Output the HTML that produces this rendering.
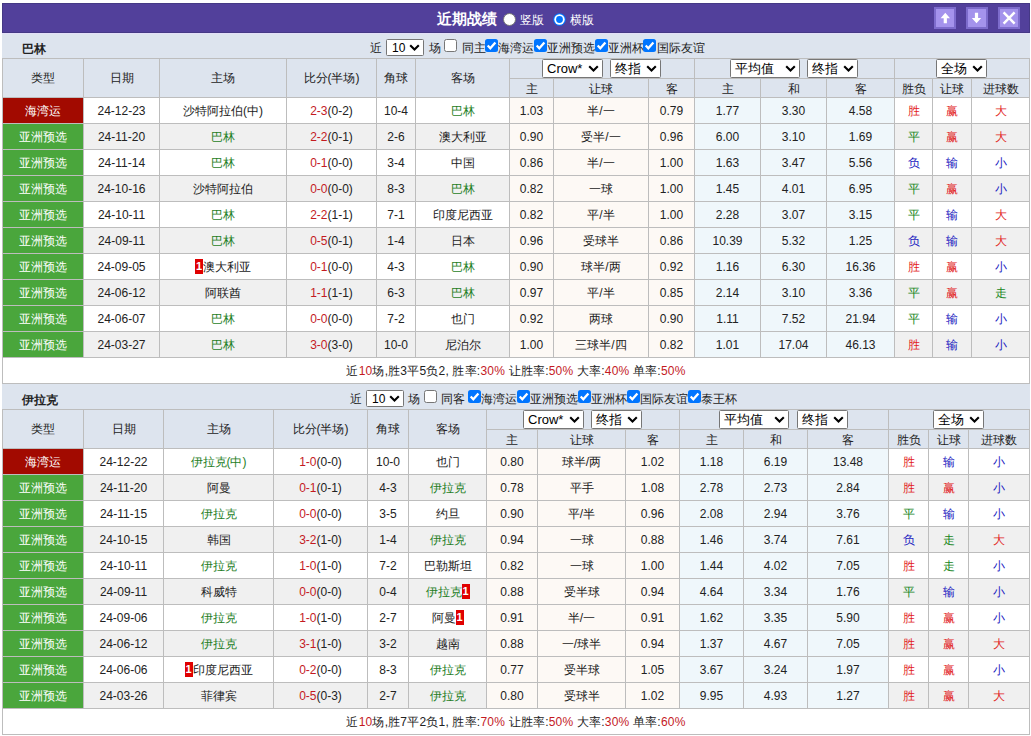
<!DOCTYPE html>
<html><head><meta charset="utf-8"><style>
html,body{margin:0;padding:0;background:#fff;width:1031px;height:736px;overflow:hidden}
body{position:relative;font-family:"Liberation Sans",sans-serif;font-size:12px;color:#222222}
body div{position:absolute;box-sizing:content-box}
.t{white-space:nowrap}
</style></head><body>
<div style="left:2px;top:3px;width:1026px;height:28px;background:#52409b;border:1px solid #453985"></div><div class="t" style="left:437px;top:5px;height:28px;line-height:28px;white-space:nowrap;font-size:15px;font-weight:bold;color:#fff">近期战绩</div><div style="left:503px;top:13px;width:13px;height:13px"><svg width="13" height="13" viewBox="0 0 13 13" style="display:block"><circle cx="6.5" cy="6.5" r="6" fill="#fff" stroke="#767676" stroke-width="1"/></svg></div><div class="t" style="left:520px;top:6px;height:28px;line-height:28px;white-space:nowrap;color:#fff">竖版</div><div style="left:553px;top:13px;width:13px;height:13px"><svg width="13" height="13" viewBox="0 0 13 13" style="display:block"><circle cx="6.5" cy="6.5" r="6.3" fill="#0075ff"/><circle cx="6.5" cy="6.5" r="5.2" fill="#fff"/><circle cx="6.5" cy="6.5" r="3.4" fill="#0075ff"/></svg></div><div class="t" style="left:570px;top:6px;height:28px;line-height:28px;white-space:nowrap;color:#fff">横版</div><div style="left:934px;top:7px;width:18px;height:18px;background:#a493ec;border:2px solid #7d6ccc"><svg width="18" height="18" viewBox="0 0 18 18" style="display:block"><path d="M9.3 3.8 L14 9.3 L10.9 9.3 L10.9 14.2 L7.7 14.2 L7.7 9.3 L4.6 9.3 Z" fill="#fff"/></svg></div><div style="left:966px;top:7px;width:18px;height:18px;background:#a493ec;border:2px solid #7d6ccc"><svg width="18" height="18" viewBox="0 0 18 18" style="display:block"><path d="M8.5 14.2 L13.2 8.9 L10.1 8.9 L10.1 3.8 L6.9 3.8 L6.9 8.9 L3.8 8.9 Z" fill="#fff"/></svg></div><div style="left:998px;top:7px;width:18px;height:18px;background:#a493ec;border:2px solid #7d6ccc"><svg width="18" height="18" viewBox="0 0 18 18" style="display:block"><path d="M3.6 3.4 L14.6 14.6 M14.6 3.4 L3.6 14.6" stroke="#fff" stroke-width="2.5" fill="none"/></svg></div><div style="left:2px;top:33px;width:1028px;height:25px;background:#dde4ee"></div><div class="t" style="left:22px;top:41px;height:16px;line-height:16px;white-space:nowrap;font-weight:bold;color:#222">巴林</div><div class="t" style="left:370px;top:40px;height:16px;line-height:16px;white-space:nowrap;color:#222222">近</div><div style="left:386px;top:39px;width:36px;height:15px;background:#fff;border:1px solid #767676;border-radius:1.5px;"><div class="t" style="left:5px;top:1px;height:15px;line-height:15px;font-size:12px;color:#000;font-family:"Liberation Mono",monospace;">10</div><svg width="11" height="7" viewBox="0 0 11 7" style="position:absolute;right:3px;top:4px"><path d="M1.2 1.2 L5.5 5.5 L9.8 1.2" fill="none" stroke="#000" stroke-width="2.1"/></svg></div><div class="t" style="left:429px;top:40px;height:16px;line-height:16px;white-space:nowrap;color:#222222">场</div><div style="left:444px;top:39px;width:13px;height:13px"><svg width="13" height="13" viewBox="0 0 13 13" style="display:block"><rect x="0.5" y="0.5" width="12" height="12" rx="2" fill="#fff" stroke="#767676" stroke-width="1"/></svg></div><div class="t" style="left:462px;top:40px;height:16px;line-height:16px;white-space:nowrap;color:#222222">同主</div><div style="left:485px;top:39px;width:13px;height:13px"><svg width="13" height="13" viewBox="0 0 13 13" style="display:block"><rect x="0" y="0" width="13" height="13" rx="2.5" fill="#0075ff"/><path d="M2.7 6.5 L5.3 9.2 L10.4 3.4" fill="none" stroke="#fff" stroke-width="2.3"/></svg></div><div class="t" style="left:498px;top:40px;height:16px;line-height:16px;white-space:nowrap;color:#222222">海湾运</div><div style="left:534px;top:39px;width:13px;height:13px"><svg width="13" height="13" viewBox="0 0 13 13" style="display:block"><rect x="0" y="0" width="13" height="13" rx="2.5" fill="#0075ff"/><path d="M2.7 6.5 L5.3 9.2 L10.4 3.4" fill="none" stroke="#fff" stroke-width="2.3"/></svg></div><div class="t" style="left:547px;top:40px;height:16px;line-height:16px;white-space:nowrap;color:#222222">亚洲预选</div><div style="left:595px;top:39px;width:13px;height:13px"><svg width="13" height="13" viewBox="0 0 13 13" style="display:block"><rect x="0" y="0" width="13" height="13" rx="2.5" fill="#0075ff"/><path d="M2.7 6.5 L5.3 9.2 L10.4 3.4" fill="none" stroke="#fff" stroke-width="2.3"/></svg></div><div class="t" style="left:608px;top:40px;height:16px;line-height:16px;white-space:nowrap;color:#222222">亚洲杯</div><div style="left:643px;top:39px;width:13px;height:13px"><svg width="13" height="13" viewBox="0 0 13 13" style="display:block"><rect x="0" y="0" width="13" height="13" rx="2.5" fill="#0075ff"/><path d="M2.7 6.5 L5.3 9.2 L10.4 3.4" fill="none" stroke="#fff" stroke-width="2.3"/></svg></div><div class="t" style="left:657px;top:40px;height:16px;line-height:16px;white-space:nowrap;color:#222222">国际友谊</div><div style="left:2px;top:58px;width:1028px;height:40px;background:#dde4ee"></div><div class="t" style="left:3px;top:59px;width:80px;height:38px;line-height:38px;text-align:center;color:#222222">类型</div><div class="t" style="left:84px;top:59px;width:75px;height:38px;line-height:38px;text-align:center;color:#222222">日期</div><div class="t" style="left:160px;top:59px;width:126px;height:38px;line-height:38px;text-align:center;color:#222222">主场</div><div class="t" style="left:287px;top:59px;width:89px;height:38px;line-height:38px;text-align:center;color:#222222">比分(半场)</div><div class="t" style="left:377px;top:59px;width:38px;height:38px;line-height:38px;text-align:center;color:#222222">角球</div><div class="t" style="left:416px;top:59px;width:93px;height:38px;line-height:38px;text-align:center;color:#222222">客场</div><div class="t" style="left:510px;top:80px;width:43px;height:18px;line-height:18px;text-align:center;color:#222222">主</div><div class="t" style="left:554px;top:80px;width:94px;height:18px;line-height:18px;text-align:center;color:#222222">让球</div><div class="t" style="left:649px;top:80px;width:45px;height:18px;line-height:18px;text-align:center;color:#222222">客</div><div class="t" style="left:695px;top:80px;width:65px;height:18px;line-height:18px;text-align:center;color:#222222">主</div><div class="t" style="left:761px;top:80px;width:65px;height:18px;line-height:18px;text-align:center;color:#222222">和</div><div class="t" style="left:827px;top:80px;width:67px;height:18px;line-height:18px;text-align:center;color:#222222">客</div><div class="t" style="left:895px;top:80px;width:37px;height:18px;line-height:18px;text-align:center;color:#222222">胜负</div><div class="t" style="left:933px;top:80px;width:38px;height:18px;line-height:18px;text-align:center;color:#222222">让球</div><div class="t" style="left:972px;top:80px;width:57px;height:18px;line-height:18px;text-align:center;color:#222222">进球数</div><div style="left:3px;top:98px;width:80px;height:25px;background:#a20a00"></div><div style="left:84px;top:98px;width:75px;height:25px;background:#fff"></div><div style="left:160px;top:98px;width:126px;height:25px;background:#fff"></div><div style="left:287px;top:98px;width:89px;height:25px;background:#fff"></div><div style="left:377px;top:98px;width:38px;height:25px;background:#fff"></div><div style="left:416px;top:98px;width:93px;height:25px;background:#fff"></div><div style="left:510px;top:98px;width:43px;height:25px;background:#fdf9f5"></div><div style="left:554px;top:98px;width:94px;height:25px;background:#fdf9f5"></div><div style="left:649px;top:98px;width:45px;height:25px;background:#fdf9f5"></div><div style="left:695px;top:98px;width:65px;height:25px;background:#eff7fb"></div><div style="left:761px;top:98px;width:65px;height:25px;background:#eff7fb"></div><div style="left:827px;top:98px;width:67px;height:25px;background:#eff7fb"></div><div style="left:895px;top:98px;width:37px;height:25px;background:#fff"></div><div style="left:933px;top:98px;width:38px;height:25px;background:#fff"></div><div style="left:972px;top:98px;width:57px;height:25px;background:#fff"></div><div class="t" style="left:3px;top:99px;width:80px;height:25px;line-height:25px;text-align:center;color:#222222"><span style="color:#fff">海湾运</span></div><div class="t" style="left:84px;top:99px;width:75px;height:25px;line-height:25px;text-align:center;color:#222222">24-12-23</div><div class="t" style="left:160px;top:99px;width:126px;height:25px;line-height:25px;text-align:center;color:#222222"><span style="color:#222222">沙特阿拉伯(中)</span></div><div class="t" style="left:287px;top:99px;width:89px;height:25px;line-height:25px;text-align:center;color:#222222"><span style="color:#c41a1f">2-3</span>(0-2)</div><div class="t" style="left:377px;top:99px;width:38px;height:25px;line-height:25px;text-align:center;color:#222222">10-4</div><div class="t" style="left:416px;top:99px;width:93px;height:25px;line-height:25px;text-align:center;color:#222222"><span style="color:#1e7e1e">巴林</span></div><div class="t" style="left:510px;top:99px;width:43px;height:25px;line-height:25px;text-align:center;color:#222222">1.03</div><div class="t" style="left:554px;top:99px;width:94px;height:25px;line-height:25px;text-align:center;color:#222222">半/一</div><div class="t" style="left:649px;top:99px;width:45px;height:25px;line-height:25px;text-align:center;color:#222222">0.79</div><div class="t" style="left:695px;top:99px;width:65px;height:25px;line-height:25px;text-align:center;color:#222222">1.77</div><div class="t" style="left:761px;top:99px;width:65px;height:25px;line-height:25px;text-align:center;color:#222222">3.30</div><div class="t" style="left:827px;top:99px;width:67px;height:25px;line-height:25px;text-align:center;color:#222222">4.58</div><div class="t" style="left:895px;top:99px;width:37px;height:25px;line-height:25px;text-align:center;color:#222222"><span style="color:#e21c1c">胜</span></div><div class="t" style="left:933px;top:99px;width:38px;height:25px;line-height:25px;text-align:center;color:#222222"><span style="color:#e21c1c">赢</span></div><div class="t" style="left:972px;top:99px;width:57px;height:25px;line-height:25px;text-align:center;color:#222222"><span style="color:#e21c1c">大</span></div><div style="left:3px;top:124px;width:80px;height:25px;background:#4aa63c"></div><div style="left:84px;top:124px;width:75px;height:25px;background:#f0f0f0"></div><div style="left:160px;top:124px;width:126px;height:25px;background:#f0f0f0"></div><div style="left:287px;top:124px;width:89px;height:25px;background:#f0f0f0"></div><div style="left:377px;top:124px;width:38px;height:25px;background:#f0f0f0"></div><div style="left:416px;top:124px;width:93px;height:25px;background:#f0f0f0"></div><div style="left:510px;top:124px;width:43px;height:25px;background:#fdf9f5"></div><div style="left:554px;top:124px;width:94px;height:25px;background:#fdf9f5"></div><div style="left:649px;top:124px;width:45px;height:25px;background:#fdf9f5"></div><div style="left:695px;top:124px;width:65px;height:25px;background:#eff7fb"></div><div style="left:761px;top:124px;width:65px;height:25px;background:#eff7fb"></div><div style="left:827px;top:124px;width:67px;height:25px;background:#eff7fb"></div><div style="left:895px;top:124px;width:37px;height:25px;background:#f0f0f0"></div><div style="left:933px;top:124px;width:38px;height:25px;background:#f0f0f0"></div><div style="left:972px;top:124px;width:57px;height:25px;background:#f0f0f0"></div><div class="t" style="left:3px;top:125px;width:80px;height:25px;line-height:25px;text-align:center;color:#222222"><span style="color:#fff">亚洲预选</span></div><div class="t" style="left:84px;top:125px;width:75px;height:25px;line-height:25px;text-align:center;color:#222222">24-11-20</div><div class="t" style="left:160px;top:125px;width:126px;height:25px;line-height:25px;text-align:center;color:#222222"><span style="color:#1e7e1e">巴林</span></div><div class="t" style="left:287px;top:125px;width:89px;height:25px;line-height:25px;text-align:center;color:#222222"><span style="color:#c41a1f">2-2</span>(0-1)</div><div class="t" style="left:377px;top:125px;width:38px;height:25px;line-height:25px;text-align:center;color:#222222">2-6</div><div class="t" style="left:416px;top:125px;width:93px;height:25px;line-height:25px;text-align:center;color:#222222"><span style="color:#222222">澳大利亚</span></div><div class="t" style="left:510px;top:125px;width:43px;height:25px;line-height:25px;text-align:center;color:#222222">0.90</div><div class="t" style="left:554px;top:125px;width:94px;height:25px;line-height:25px;text-align:center;color:#222222">受半/一</div><div class="t" style="left:649px;top:125px;width:45px;height:25px;line-height:25px;text-align:center;color:#222222">0.96</div><div class="t" style="left:695px;top:125px;width:65px;height:25px;line-height:25px;text-align:center;color:#222222">6.00</div><div class="t" style="left:761px;top:125px;width:65px;height:25px;line-height:25px;text-align:center;color:#222222">3.10</div><div class="t" style="left:827px;top:125px;width:67px;height:25px;line-height:25px;text-align:center;color:#222222">1.69</div><div class="t" style="left:895px;top:125px;width:37px;height:25px;line-height:25px;text-align:center;color:#222222"><span style="color:#16861a">平</span></div><div class="t" style="left:933px;top:125px;width:38px;height:25px;line-height:25px;text-align:center;color:#222222"><span style="color:#e21c1c">赢</span></div><div class="t" style="left:972px;top:125px;width:57px;height:25px;line-height:25px;text-align:center;color:#222222"><span style="color:#e21c1c">大</span></div><div style="left:3px;top:150px;width:80px;height:25px;background:#4aa63c"></div><div style="left:84px;top:150px;width:75px;height:25px;background:#fff"></div><div style="left:160px;top:150px;width:126px;height:25px;background:#fff"></div><div style="left:287px;top:150px;width:89px;height:25px;background:#fff"></div><div style="left:377px;top:150px;width:38px;height:25px;background:#fff"></div><div style="left:416px;top:150px;width:93px;height:25px;background:#fff"></div><div style="left:510px;top:150px;width:43px;height:25px;background:#fdf9f5"></div><div style="left:554px;top:150px;width:94px;height:25px;background:#fdf9f5"></div><div style="left:649px;top:150px;width:45px;height:25px;background:#fdf9f5"></div><div style="left:695px;top:150px;width:65px;height:25px;background:#eff7fb"></div><div style="left:761px;top:150px;width:65px;height:25px;background:#eff7fb"></div><div style="left:827px;top:150px;width:67px;height:25px;background:#eff7fb"></div><div style="left:895px;top:150px;width:37px;height:25px;background:#fff"></div><div style="left:933px;top:150px;width:38px;height:25px;background:#fff"></div><div style="left:972px;top:150px;width:57px;height:25px;background:#fff"></div><div class="t" style="left:3px;top:151px;width:80px;height:25px;line-height:25px;text-align:center;color:#222222"><span style="color:#fff">亚洲预选</span></div><div class="t" style="left:84px;top:151px;width:75px;height:25px;line-height:25px;text-align:center;color:#222222">24-11-14</div><div class="t" style="left:160px;top:151px;width:126px;height:25px;line-height:25px;text-align:center;color:#222222"><span style="color:#1e7e1e">巴林</span></div><div class="t" style="left:287px;top:151px;width:89px;height:25px;line-height:25px;text-align:center;color:#222222"><span style="color:#c41a1f">0-1</span>(0-0)</div><div class="t" style="left:377px;top:151px;width:38px;height:25px;line-height:25px;text-align:center;color:#222222">3-4</div><div class="t" style="left:416px;top:151px;width:93px;height:25px;line-height:25px;text-align:center;color:#222222"><span style="color:#222222">中国</span></div><div class="t" style="left:510px;top:151px;width:43px;height:25px;line-height:25px;text-align:center;color:#222222">0.86</div><div class="t" style="left:554px;top:151px;width:94px;height:25px;line-height:25px;text-align:center;color:#222222">半/一</div><div class="t" style="left:649px;top:151px;width:45px;height:25px;line-height:25px;text-align:center;color:#222222">1.00</div><div class="t" style="left:695px;top:151px;width:65px;height:25px;line-height:25px;text-align:center;color:#222222">1.63</div><div class="t" style="left:761px;top:151px;width:65px;height:25px;line-height:25px;text-align:center;color:#222222">3.47</div><div class="t" style="left:827px;top:151px;width:67px;height:25px;line-height:25px;text-align:center;color:#222222">5.56</div><div class="t" style="left:895px;top:151px;width:37px;height:25px;line-height:25px;text-align:center;color:#222222"><span style="color:#1a1ac0">负</span></div><div class="t" style="left:933px;top:151px;width:38px;height:25px;line-height:25px;text-align:center;color:#222222"><span style="color:#1a1ac0">输</span></div><div class="t" style="left:972px;top:151px;width:57px;height:25px;line-height:25px;text-align:center;color:#222222"><span style="color:#1a1ac0">小</span></div><div style="left:3px;top:176px;width:80px;height:25px;background:#4aa63c"></div><div style="left:84px;top:176px;width:75px;height:25px;background:#f0f0f0"></div><div style="left:160px;top:176px;width:126px;height:25px;background:#f0f0f0"></div><div style="left:287px;top:176px;width:89px;height:25px;background:#f0f0f0"></div><div style="left:377px;top:176px;width:38px;height:25px;background:#f0f0f0"></div><div style="left:416px;top:176px;width:93px;height:25px;background:#f0f0f0"></div><div style="left:510px;top:176px;width:43px;height:25px;background:#fdf9f5"></div><div style="left:554px;top:176px;width:94px;height:25px;background:#fdf9f5"></div><div style="left:649px;top:176px;width:45px;height:25px;background:#fdf9f5"></div><div style="left:695px;top:176px;width:65px;height:25px;background:#eff7fb"></div><div style="left:761px;top:176px;width:65px;height:25px;background:#eff7fb"></div><div style="left:827px;top:176px;width:67px;height:25px;background:#eff7fb"></div><div style="left:895px;top:176px;width:37px;height:25px;background:#f0f0f0"></div><div style="left:933px;top:176px;width:38px;height:25px;background:#f0f0f0"></div><div style="left:972px;top:176px;width:57px;height:25px;background:#f0f0f0"></div><div class="t" style="left:3px;top:177px;width:80px;height:25px;line-height:25px;text-align:center;color:#222222"><span style="color:#fff">亚洲预选</span></div><div class="t" style="left:84px;top:177px;width:75px;height:25px;line-height:25px;text-align:center;color:#222222">24-10-16</div><div class="t" style="left:160px;top:177px;width:126px;height:25px;line-height:25px;text-align:center;color:#222222"><span style="color:#222222">沙特阿拉伯</span></div><div class="t" style="left:287px;top:177px;width:89px;height:25px;line-height:25px;text-align:center;color:#222222"><span style="color:#c41a1f">0-0</span>(0-0)</div><div class="t" style="left:377px;top:177px;width:38px;height:25px;line-height:25px;text-align:center;color:#222222">8-3</div><div class="t" style="left:416px;top:177px;width:93px;height:25px;line-height:25px;text-align:center;color:#222222"><span style="color:#1e7e1e">巴林</span></div><div class="t" style="left:510px;top:177px;width:43px;height:25px;line-height:25px;text-align:center;color:#222222">0.82</div><div class="t" style="left:554px;top:177px;width:94px;height:25px;line-height:25px;text-align:center;color:#222222">一球</div><div class="t" style="left:649px;top:177px;width:45px;height:25px;line-height:25px;text-align:center;color:#222222">1.00</div><div class="t" style="left:695px;top:177px;width:65px;height:25px;line-height:25px;text-align:center;color:#222222">1.45</div><div class="t" style="left:761px;top:177px;width:65px;height:25px;line-height:25px;text-align:center;color:#222222">4.01</div><div class="t" style="left:827px;top:177px;width:67px;height:25px;line-height:25px;text-align:center;color:#222222">6.95</div><div class="t" style="left:895px;top:177px;width:37px;height:25px;line-height:25px;text-align:center;color:#222222"><span style="color:#16861a">平</span></div><div class="t" style="left:933px;top:177px;width:38px;height:25px;line-height:25px;text-align:center;color:#222222"><span style="color:#e21c1c">赢</span></div><div class="t" style="left:972px;top:177px;width:57px;height:25px;line-height:25px;text-align:center;color:#222222"><span style="color:#1a1ac0">小</span></div><div style="left:3px;top:202px;width:80px;height:25px;background:#4aa63c"></div><div style="left:84px;top:202px;width:75px;height:25px;background:#fff"></div><div style="left:160px;top:202px;width:126px;height:25px;background:#fff"></div><div style="left:287px;top:202px;width:89px;height:25px;background:#fff"></div><div style="left:377px;top:202px;width:38px;height:25px;background:#fff"></div><div style="left:416px;top:202px;width:93px;height:25px;background:#fff"></div><div style="left:510px;top:202px;width:43px;height:25px;background:#fdf9f5"></div><div style="left:554px;top:202px;width:94px;height:25px;background:#fdf9f5"></div><div style="left:649px;top:202px;width:45px;height:25px;background:#fdf9f5"></div><div style="left:695px;top:202px;width:65px;height:25px;background:#eff7fb"></div><div style="left:761px;top:202px;width:65px;height:25px;background:#eff7fb"></div><div style="left:827px;top:202px;width:67px;height:25px;background:#eff7fb"></div><div style="left:895px;top:202px;width:37px;height:25px;background:#fff"></div><div style="left:933px;top:202px;width:38px;height:25px;background:#fff"></div><div style="left:972px;top:202px;width:57px;height:25px;background:#fff"></div><div class="t" style="left:3px;top:203px;width:80px;height:25px;line-height:25px;text-align:center;color:#222222"><span style="color:#fff">亚洲预选</span></div><div class="t" style="left:84px;top:203px;width:75px;height:25px;line-height:25px;text-align:center;color:#222222">24-10-11</div><div class="t" style="left:160px;top:203px;width:126px;height:25px;line-height:25px;text-align:center;color:#222222"><span style="color:#1e7e1e">巴林</span></div><div class="t" style="left:287px;top:203px;width:89px;height:25px;line-height:25px;text-align:center;color:#222222"><span style="color:#c41a1f">2-2</span>(1-1)</div><div class="t" style="left:377px;top:203px;width:38px;height:25px;line-height:25px;text-align:center;color:#222222">7-1</div><div class="t" style="left:416px;top:203px;width:93px;height:25px;line-height:25px;text-align:center;color:#222222"><span style="color:#222222">印度尼西亚</span></div><div class="t" style="left:510px;top:203px;width:43px;height:25px;line-height:25px;text-align:center;color:#222222">0.82</div><div class="t" style="left:554px;top:203px;width:94px;height:25px;line-height:25px;text-align:center;color:#222222">平/半</div><div class="t" style="left:649px;top:203px;width:45px;height:25px;line-height:25px;text-align:center;color:#222222">1.00</div><div class="t" style="left:695px;top:203px;width:65px;height:25px;line-height:25px;text-align:center;color:#222222">2.28</div><div class="t" style="left:761px;top:203px;width:65px;height:25px;line-height:25px;text-align:center;color:#222222">3.07</div><div class="t" style="left:827px;top:203px;width:67px;height:25px;line-height:25px;text-align:center;color:#222222">3.15</div><div class="t" style="left:895px;top:203px;width:37px;height:25px;line-height:25px;text-align:center;color:#222222"><span style="color:#16861a">平</span></div><div class="t" style="left:933px;top:203px;width:38px;height:25px;line-height:25px;text-align:center;color:#222222"><span style="color:#1a1ac0">输</span></div><div class="t" style="left:972px;top:203px;width:57px;height:25px;line-height:25px;text-align:center;color:#222222"><span style="color:#e21c1c">大</span></div><div style="left:3px;top:228px;width:80px;height:25px;background:#4aa63c"></div><div style="left:84px;top:228px;width:75px;height:25px;background:#f0f0f0"></div><div style="left:160px;top:228px;width:126px;height:25px;background:#f0f0f0"></div><div style="left:287px;top:228px;width:89px;height:25px;background:#f0f0f0"></div><div style="left:377px;top:228px;width:38px;height:25px;background:#f0f0f0"></div><div style="left:416px;top:228px;width:93px;height:25px;background:#f0f0f0"></div><div style="left:510px;top:228px;width:43px;height:25px;background:#fdf9f5"></div><div style="left:554px;top:228px;width:94px;height:25px;background:#fdf9f5"></div><div style="left:649px;top:228px;width:45px;height:25px;background:#fdf9f5"></div><div style="left:695px;top:228px;width:65px;height:25px;background:#eff7fb"></div><div style="left:761px;top:228px;width:65px;height:25px;background:#eff7fb"></div><div style="left:827px;top:228px;width:67px;height:25px;background:#eff7fb"></div><div style="left:895px;top:228px;width:37px;height:25px;background:#f0f0f0"></div><div style="left:933px;top:228px;width:38px;height:25px;background:#f0f0f0"></div><div style="left:972px;top:228px;width:57px;height:25px;background:#f0f0f0"></div><div class="t" style="left:3px;top:229px;width:80px;height:25px;line-height:25px;text-align:center;color:#222222"><span style="color:#fff">亚洲预选</span></div><div class="t" style="left:84px;top:229px;width:75px;height:25px;line-height:25px;text-align:center;color:#222222">24-09-11</div><div class="t" style="left:160px;top:229px;width:126px;height:25px;line-height:25px;text-align:center;color:#222222"><span style="color:#1e7e1e">巴林</span></div><div class="t" style="left:287px;top:229px;width:89px;height:25px;line-height:25px;text-align:center;color:#222222"><span style="color:#c41a1f">0-5</span>(0-1)</div><div class="t" style="left:377px;top:229px;width:38px;height:25px;line-height:25px;text-align:center;color:#222222">1-4</div><div class="t" style="left:416px;top:229px;width:93px;height:25px;line-height:25px;text-align:center;color:#222222"><span style="color:#222222">日本</span></div><div class="t" style="left:510px;top:229px;width:43px;height:25px;line-height:25px;text-align:center;color:#222222">0.96</div><div class="t" style="left:554px;top:229px;width:94px;height:25px;line-height:25px;text-align:center;color:#222222">受球半</div><div class="t" style="left:649px;top:229px;width:45px;height:25px;line-height:25px;text-align:center;color:#222222">0.86</div><div class="t" style="left:695px;top:229px;width:65px;height:25px;line-height:25px;text-align:center;color:#222222">10.39</div><div class="t" style="left:761px;top:229px;width:65px;height:25px;line-height:25px;text-align:center;color:#222222">5.32</div><div class="t" style="left:827px;top:229px;width:67px;height:25px;line-height:25px;text-align:center;color:#222222">1.25</div><div class="t" style="left:895px;top:229px;width:37px;height:25px;line-height:25px;text-align:center;color:#222222"><span style="color:#1a1ac0">负</span></div><div class="t" style="left:933px;top:229px;width:38px;height:25px;line-height:25px;text-align:center;color:#222222"><span style="color:#1a1ac0">输</span></div><div class="t" style="left:972px;top:229px;width:57px;height:25px;line-height:25px;text-align:center;color:#222222"><span style="color:#e21c1c">大</span></div><div style="left:3px;top:254px;width:80px;height:25px;background:#4aa63c"></div><div style="left:84px;top:254px;width:75px;height:25px;background:#fff"></div><div style="left:160px;top:254px;width:126px;height:25px;background:#fff"></div><div style="left:287px;top:254px;width:89px;height:25px;background:#fff"></div><div style="left:377px;top:254px;width:38px;height:25px;background:#fff"></div><div style="left:416px;top:254px;width:93px;height:25px;background:#fff"></div><div style="left:510px;top:254px;width:43px;height:25px;background:#fdf9f5"></div><div style="left:554px;top:254px;width:94px;height:25px;background:#fdf9f5"></div><div style="left:649px;top:254px;width:45px;height:25px;background:#fdf9f5"></div><div style="left:695px;top:254px;width:65px;height:25px;background:#eff7fb"></div><div style="left:761px;top:254px;width:65px;height:25px;background:#eff7fb"></div><div style="left:827px;top:254px;width:67px;height:25px;background:#eff7fb"></div><div style="left:895px;top:254px;width:37px;height:25px;background:#fff"></div><div style="left:933px;top:254px;width:38px;height:25px;background:#fff"></div><div style="left:972px;top:254px;width:57px;height:25px;background:#fff"></div><div class="t" style="left:3px;top:255px;width:80px;height:25px;line-height:25px;text-align:center;color:#222222"><span style="color:#fff">亚洲预选</span></div><div class="t" style="left:84px;top:255px;width:75px;height:25px;line-height:25px;text-align:center;color:#222222">24-09-05</div><div class="t" style="left:160px;top:255px;width:126px;height:25px;line-height:25px;text-align:center;color:#222222"><span style="display:inline-block;background:#e00000;color:#fff;width:8px;height:15px;line-height:15px;text-align:center;font-size:11px;font-weight:bold;vertical-align:top;margin-top:4px;overflow:hidden">1</span><span style="color:#222222">澳大利亚</span></div><div class="t" style="left:287px;top:255px;width:89px;height:25px;line-height:25px;text-align:center;color:#222222"><span style="color:#c41a1f">0-1</span>(0-0)</div><div class="t" style="left:377px;top:255px;width:38px;height:25px;line-height:25px;text-align:center;color:#222222">4-3</div><div class="t" style="left:416px;top:255px;width:93px;height:25px;line-height:25px;text-align:center;color:#222222"><span style="color:#1e7e1e">巴林</span></div><div class="t" style="left:510px;top:255px;width:43px;height:25px;line-height:25px;text-align:center;color:#222222">0.90</div><div class="t" style="left:554px;top:255px;width:94px;height:25px;line-height:25px;text-align:center;color:#222222">球半/两</div><div class="t" style="left:649px;top:255px;width:45px;height:25px;line-height:25px;text-align:center;color:#222222">0.92</div><div class="t" style="left:695px;top:255px;width:65px;height:25px;line-height:25px;text-align:center;color:#222222">1.16</div><div class="t" style="left:761px;top:255px;width:65px;height:25px;line-height:25px;text-align:center;color:#222222">6.30</div><div class="t" style="left:827px;top:255px;width:67px;height:25px;line-height:25px;text-align:center;color:#222222">16.36</div><div class="t" style="left:895px;top:255px;width:37px;height:25px;line-height:25px;text-align:center;color:#222222"><span style="color:#e21c1c">胜</span></div><div class="t" style="left:933px;top:255px;width:38px;height:25px;line-height:25px;text-align:center;color:#222222"><span style="color:#e21c1c">赢</span></div><div class="t" style="left:972px;top:255px;width:57px;height:25px;line-height:25px;text-align:center;color:#222222"><span style="color:#1a1ac0">小</span></div><div style="left:3px;top:280px;width:80px;height:25px;background:#4aa63c"></div><div style="left:84px;top:280px;width:75px;height:25px;background:#f0f0f0"></div><div style="left:160px;top:280px;width:126px;height:25px;background:#f0f0f0"></div><div style="left:287px;top:280px;width:89px;height:25px;background:#f0f0f0"></div><div style="left:377px;top:280px;width:38px;height:25px;background:#f0f0f0"></div><div style="left:416px;top:280px;width:93px;height:25px;background:#f0f0f0"></div><div style="left:510px;top:280px;width:43px;height:25px;background:#fdf9f5"></div><div style="left:554px;top:280px;width:94px;height:25px;background:#fdf9f5"></div><div style="left:649px;top:280px;width:45px;height:25px;background:#fdf9f5"></div><div style="left:695px;top:280px;width:65px;height:25px;background:#eff7fb"></div><div style="left:761px;top:280px;width:65px;height:25px;background:#eff7fb"></div><div style="left:827px;top:280px;width:67px;height:25px;background:#eff7fb"></div><div style="left:895px;top:280px;width:37px;height:25px;background:#f0f0f0"></div><div style="left:933px;top:280px;width:38px;height:25px;background:#f0f0f0"></div><div style="left:972px;top:280px;width:57px;height:25px;background:#f0f0f0"></div><div class="t" style="left:3px;top:281px;width:80px;height:25px;line-height:25px;text-align:center;color:#222222"><span style="color:#fff">亚洲预选</span></div><div class="t" style="left:84px;top:281px;width:75px;height:25px;line-height:25px;text-align:center;color:#222222">24-06-12</div><div class="t" style="left:160px;top:281px;width:126px;height:25px;line-height:25px;text-align:center;color:#222222"><span style="color:#222222">阿联酋</span></div><div class="t" style="left:287px;top:281px;width:89px;height:25px;line-height:25px;text-align:center;color:#222222"><span style="color:#c41a1f">1-1</span>(1-1)</div><div class="t" style="left:377px;top:281px;width:38px;height:25px;line-height:25px;text-align:center;color:#222222">6-3</div><div class="t" style="left:416px;top:281px;width:93px;height:25px;line-height:25px;text-align:center;color:#222222"><span style="color:#1e7e1e">巴林</span></div><div class="t" style="left:510px;top:281px;width:43px;height:25px;line-height:25px;text-align:center;color:#222222">0.97</div><div class="t" style="left:554px;top:281px;width:94px;height:25px;line-height:25px;text-align:center;color:#222222">平/半</div><div class="t" style="left:649px;top:281px;width:45px;height:25px;line-height:25px;text-align:center;color:#222222">0.85</div><div class="t" style="left:695px;top:281px;width:65px;height:25px;line-height:25px;text-align:center;color:#222222">2.14</div><div class="t" style="left:761px;top:281px;width:65px;height:25px;line-height:25px;text-align:center;color:#222222">3.10</div><div class="t" style="left:827px;top:281px;width:67px;height:25px;line-height:25px;text-align:center;color:#222222">3.36</div><div class="t" style="left:895px;top:281px;width:37px;height:25px;line-height:25px;text-align:center;color:#222222"><span style="color:#16861a">平</span></div><div class="t" style="left:933px;top:281px;width:38px;height:25px;line-height:25px;text-align:center;color:#222222"><span style="color:#e21c1c">赢</span></div><div class="t" style="left:972px;top:281px;width:57px;height:25px;line-height:25px;text-align:center;color:#222222"><span style="color:#16861a">走</span></div><div style="left:3px;top:306px;width:80px;height:25px;background:#4aa63c"></div><div style="left:84px;top:306px;width:75px;height:25px;background:#fff"></div><div style="left:160px;top:306px;width:126px;height:25px;background:#fff"></div><div style="left:287px;top:306px;width:89px;height:25px;background:#fff"></div><div style="left:377px;top:306px;width:38px;height:25px;background:#fff"></div><div style="left:416px;top:306px;width:93px;height:25px;background:#fff"></div><div style="left:510px;top:306px;width:43px;height:25px;background:#fdf9f5"></div><div style="left:554px;top:306px;width:94px;height:25px;background:#fdf9f5"></div><div style="left:649px;top:306px;width:45px;height:25px;background:#fdf9f5"></div><div style="left:695px;top:306px;width:65px;height:25px;background:#eff7fb"></div><div style="left:761px;top:306px;width:65px;height:25px;background:#eff7fb"></div><div style="left:827px;top:306px;width:67px;height:25px;background:#eff7fb"></div><div style="left:895px;top:306px;width:37px;height:25px;background:#fff"></div><div style="left:933px;top:306px;width:38px;height:25px;background:#fff"></div><div style="left:972px;top:306px;width:57px;height:25px;background:#fff"></div><div class="t" style="left:3px;top:307px;width:80px;height:25px;line-height:25px;text-align:center;color:#222222"><span style="color:#fff">亚洲预选</span></div><div class="t" style="left:84px;top:307px;width:75px;height:25px;line-height:25px;text-align:center;color:#222222">24-06-07</div><div class="t" style="left:160px;top:307px;width:126px;height:25px;line-height:25px;text-align:center;color:#222222"><span style="color:#1e7e1e">巴林</span></div><div class="t" style="left:287px;top:307px;width:89px;height:25px;line-height:25px;text-align:center;color:#222222"><span style="color:#c41a1f">0-0</span>(0-0)</div><div class="t" style="left:377px;top:307px;width:38px;height:25px;line-height:25px;text-align:center;color:#222222">7-2</div><div class="t" style="left:416px;top:307px;width:93px;height:25px;line-height:25px;text-align:center;color:#222222"><span style="color:#222222">也门</span></div><div class="t" style="left:510px;top:307px;width:43px;height:25px;line-height:25px;text-align:center;color:#222222">0.92</div><div class="t" style="left:554px;top:307px;width:94px;height:25px;line-height:25px;text-align:center;color:#222222">两球</div><div class="t" style="left:649px;top:307px;width:45px;height:25px;line-height:25px;text-align:center;color:#222222">0.90</div><div class="t" style="left:695px;top:307px;width:65px;height:25px;line-height:25px;text-align:center;color:#222222">1.11</div><div class="t" style="left:761px;top:307px;width:65px;height:25px;line-height:25px;text-align:center;color:#222222">7.52</div><div class="t" style="left:827px;top:307px;width:67px;height:25px;line-height:25px;text-align:center;color:#222222">21.94</div><div class="t" style="left:895px;top:307px;width:37px;height:25px;line-height:25px;text-align:center;color:#222222"><span style="color:#16861a">平</span></div><div class="t" style="left:933px;top:307px;width:38px;height:25px;line-height:25px;text-align:center;color:#222222"><span style="color:#1a1ac0">输</span></div><div class="t" style="left:972px;top:307px;width:57px;height:25px;line-height:25px;text-align:center;color:#222222"><span style="color:#1a1ac0">小</span></div><div style="left:3px;top:332px;width:80px;height:25px;background:#4aa63c"></div><div style="left:84px;top:332px;width:75px;height:25px;background:#f0f0f0"></div><div style="left:160px;top:332px;width:126px;height:25px;background:#f0f0f0"></div><div style="left:287px;top:332px;width:89px;height:25px;background:#f0f0f0"></div><div style="left:377px;top:332px;width:38px;height:25px;background:#f0f0f0"></div><div style="left:416px;top:332px;width:93px;height:25px;background:#f0f0f0"></div><div style="left:510px;top:332px;width:43px;height:25px;background:#fdf9f5"></div><div style="left:554px;top:332px;width:94px;height:25px;background:#fdf9f5"></div><div style="left:649px;top:332px;width:45px;height:25px;background:#fdf9f5"></div><div style="left:695px;top:332px;width:65px;height:25px;background:#eff7fb"></div><div style="left:761px;top:332px;width:65px;height:25px;background:#eff7fb"></div><div style="left:827px;top:332px;width:67px;height:25px;background:#eff7fb"></div><div style="left:895px;top:332px;width:37px;height:25px;background:#f0f0f0"></div><div style="left:933px;top:332px;width:38px;height:25px;background:#f0f0f0"></div><div style="left:972px;top:332px;width:57px;height:25px;background:#f0f0f0"></div><div class="t" style="left:3px;top:333px;width:80px;height:25px;line-height:25px;text-align:center;color:#222222"><span style="color:#fff">亚洲预选</span></div><div class="t" style="left:84px;top:333px;width:75px;height:25px;line-height:25px;text-align:center;color:#222222">24-03-27</div><div class="t" style="left:160px;top:333px;width:126px;height:25px;line-height:25px;text-align:center;color:#222222"><span style="color:#1e7e1e">巴林</span></div><div class="t" style="left:287px;top:333px;width:89px;height:25px;line-height:25px;text-align:center;color:#222222"><span style="color:#c41a1f">3-0</span>(3-0)</div><div class="t" style="left:377px;top:333px;width:38px;height:25px;line-height:25px;text-align:center;color:#222222">10-0</div><div class="t" style="left:416px;top:333px;width:93px;height:25px;line-height:25px;text-align:center;color:#222222"><span style="color:#222222">尼泊尔</span></div><div class="t" style="left:510px;top:333px;width:43px;height:25px;line-height:25px;text-align:center;color:#222222">1.00</div><div class="t" style="left:554px;top:333px;width:94px;height:25px;line-height:25px;text-align:center;color:#222222">三球半/四</div><div class="t" style="left:649px;top:333px;width:45px;height:25px;line-height:25px;text-align:center;color:#222222">0.82</div><div class="t" style="left:695px;top:333px;width:65px;height:25px;line-height:25px;text-align:center;color:#222222">1.01</div><div class="t" style="left:761px;top:333px;width:65px;height:25px;line-height:25px;text-align:center;color:#222222">17.04</div><div class="t" style="left:827px;top:333px;width:67px;height:25px;line-height:25px;text-align:center;color:#222222">46.13</div><div class="t" style="left:895px;top:333px;width:37px;height:25px;line-height:25px;text-align:center;color:#222222"><span style="color:#e21c1c">胜</span></div><div class="t" style="left:933px;top:333px;width:38px;height:25px;line-height:25px;text-align:center;color:#222222"><span style="color:#1a1ac0">输</span></div><div class="t" style="left:972px;top:333px;width:57px;height:25px;line-height:25px;text-align:center;color:#222222"><span style="color:#1a1ac0">小</span></div><div style="left:2px;top:357px;width:1028px;height:26px;background:#fff"></div><div class="t" style="left:3px;top:359px;width:1026px;height:25px;line-height:25px;text-align:center;color:#222222;letter-spacing:0.2px">近<span style="color:#c41a1f">10</span>场,胜3平5负2, 胜率:<span style="color:#c41a1f">30%</span> 让胜率:<span style="color:#c41a1f">50%</span> 大率:<span style="color:#c41a1f">40%</span> 单率:<span style="color:#c41a1f">50%</span></div><div style="left:2px;top:58px;width:1028px;height:1px;background:#bdbdbd"></div><div style="left:2px;top:97px;width:1028px;height:1px;background:#bdbdbd"></div><div style="left:2px;top:123px;width:1028px;height:1px;background:#bdbdbd"></div><div style="left:2px;top:149px;width:1028px;height:1px;background:#bdbdbd"></div><div style="left:2px;top:175px;width:1028px;height:1px;background:#bdbdbd"></div><div style="left:2px;top:201px;width:1028px;height:1px;background:#bdbdbd"></div><div style="left:2px;top:227px;width:1028px;height:1px;background:#bdbdbd"></div><div style="left:2px;top:253px;width:1028px;height:1px;background:#bdbdbd"></div><div style="left:2px;top:279px;width:1028px;height:1px;background:#bdbdbd"></div><div style="left:2px;top:305px;width:1028px;height:1px;background:#bdbdbd"></div><div style="left:2px;top:331px;width:1028px;height:1px;background:#bdbdbd"></div><div style="left:2px;top:357px;width:1028px;height:1px;background:#bdbdbd"></div><div style="left:2px;top:383px;width:1028px;height:1px;background:#bdbdbd"></div><div style="left:509px;top:78px;width:521px;height:1px;background:#bdbdbd"></div><div style="left:2px;top:58px;width:1px;height:326px;background:#bdbdbd"></div><div style="left:83px;top:58px;width:1px;height:299px;background:#bdbdbd"></div><div style="left:159px;top:58px;width:1px;height:299px;background:#bdbdbd"></div><div style="left:286px;top:58px;width:1px;height:299px;background:#bdbdbd"></div><div style="left:376px;top:58px;width:1px;height:299px;background:#bdbdbd"></div><div style="left:415px;top:58px;width:1px;height:299px;background:#bdbdbd"></div><div style="left:509px;top:58px;width:1px;height:299px;background:#bdbdbd"></div><div style="left:553px;top:78px;width:1px;height:279px;background:#bdbdbd"></div><div style="left:648px;top:78px;width:1px;height:279px;background:#bdbdbd"></div><div style="left:694px;top:58px;width:1px;height:299px;background:#bdbdbd"></div><div style="left:760px;top:78px;width:1px;height:279px;background:#bdbdbd"></div><div style="left:826px;top:78px;width:1px;height:279px;background:#bdbdbd"></div><div style="left:894px;top:58px;width:1px;height:299px;background:#bdbdbd"></div><div style="left:932px;top:78px;width:1px;height:279px;background:#bdbdbd"></div><div style="left:971px;top:78px;width:1px;height:279px;background:#bdbdbd"></div><div style="left:1029px;top:58px;width:1px;height:326px;background:#bdbdbd"></div><div style="left:542px;top:59px;width:59px;height:17px;background:#fff;border:1px solid #767676;border-radius:1.5px;"><div class="t" style="left:4px;top:0px;height:17px;line-height:17px;font-size:13px;color:#000;">Crow*</div><svg width="11" height="7" viewBox="0 0 11 7" style="position:absolute;right:3px;top:5px"><path d="M1.2 1.2 L5.5 5.5 L9.8 1.2" fill="none" stroke="#000" stroke-width="2.1"/></svg></div><div style="left:610px;top:59px;width:49px;height:17px;background:#fff;border:1px solid #767676;border-radius:1.5px;"><div class="t" style="left:4px;top:0px;height:17px;line-height:17px;font-size:13px;color:#000;">终指</div><svg width="11" height="7" viewBox="0 0 11 7" style="position:absolute;right:3px;top:5px"><path d="M1.2 1.2 L5.5 5.5 L9.8 1.2" fill="none" stroke="#000" stroke-width="2.1"/></svg></div><div style="left:730px;top:59px;width:68px;height:17px;background:#fff;border:1px solid #767676;border-radius:1.5px;"><div class="t" style="left:4px;top:0px;height:17px;line-height:17px;font-size:13px;color:#000;">平均值</div><svg width="11" height="7" viewBox="0 0 11 7" style="position:absolute;right:3px;top:5px"><path d="M1.2 1.2 L5.5 5.5 L9.8 1.2" fill="none" stroke="#000" stroke-width="2.1"/></svg></div><div style="left:807px;top:59px;width:49px;height:17px;background:#fff;border:1px solid #767676;border-radius:1.5px;"><div class="t" style="left:4px;top:0px;height:17px;line-height:17px;font-size:13px;color:#000;">终指</div><svg width="11" height="7" viewBox="0 0 11 7" style="position:absolute;right:3px;top:5px"><path d="M1.2 1.2 L5.5 5.5 L9.8 1.2" fill="none" stroke="#000" stroke-width="2.1"/></svg></div><div style="left:936px;top:59px;width:49px;height:17px;background:#fff;border:1px solid #767676;border-radius:1.5px;"><div class="t" style="left:4px;top:0px;height:17px;line-height:17px;font-size:13px;color:#000;">全场</div><svg width="11" height="7" viewBox="0 0 11 7" style="position:absolute;right:3px;top:5px"><path d="M1.2 1.2 L5.5 5.5 L9.8 1.2" fill="none" stroke="#000" stroke-width="2.1"/></svg></div><div style="left:2px;top:384px;width:1028px;height:25px;background:#dde4ee"></div><div class="t" style="left:22px;top:392px;height:16px;line-height:16px;white-space:nowrap;font-weight:bold;color:#222">伊拉克</div><div class="t" style="left:350px;top:391px;height:16px;line-height:16px;white-space:nowrap;color:#222222">近</div><div style="left:366px;top:390px;width:36px;height:15px;background:#fff;border:1px solid #767676;border-radius:1.5px;"><div class="t" style="left:5px;top:1px;height:15px;line-height:15px;font-size:12px;color:#000;font-family:"Liberation Mono",monospace;">10</div><svg width="11" height="7" viewBox="0 0 11 7" style="position:absolute;right:3px;top:4px"><path d="M1.2 1.2 L5.5 5.5 L9.8 1.2" fill="none" stroke="#000" stroke-width="2.1"/></svg></div><div class="t" style="left:408px;top:391px;height:16px;line-height:16px;white-space:nowrap;color:#222222">场</div><div style="left:424px;top:390px;width:13px;height:13px"><svg width="13" height="13" viewBox="0 0 13 13" style="display:block"><rect x="0.5" y="0.5" width="12" height="12" rx="2" fill="#fff" stroke="#767676" stroke-width="1"/></svg></div><div class="t" style="left:441px;top:391px;height:16px;line-height:16px;white-space:nowrap;color:#222222">同客</div><div style="left:468px;top:390px;width:13px;height:13px"><svg width="13" height="13" viewBox="0 0 13 13" style="display:block"><rect x="0" y="0" width="13" height="13" rx="2.5" fill="#0075ff"/><path d="M2.7 6.5 L5.3 9.2 L10.4 3.4" fill="none" stroke="#fff" stroke-width="2.3"/></svg></div><div class="t" style="left:481px;top:391px;height:16px;line-height:16px;white-space:nowrap;color:#222222">海湾运</div><div style="left:517px;top:390px;width:13px;height:13px"><svg width="13" height="13" viewBox="0 0 13 13" style="display:block"><rect x="0" y="0" width="13" height="13" rx="2.5" fill="#0075ff"/><path d="M2.7 6.5 L5.3 9.2 L10.4 3.4" fill="none" stroke="#fff" stroke-width="2.3"/></svg></div><div class="t" style="left:530px;top:391px;height:16px;line-height:16px;white-space:nowrap;color:#222222">亚洲预选</div><div style="left:578px;top:390px;width:13px;height:13px"><svg width="13" height="13" viewBox="0 0 13 13" style="display:block"><rect x="0" y="0" width="13" height="13" rx="2.5" fill="#0075ff"/><path d="M2.7 6.5 L5.3 9.2 L10.4 3.4" fill="none" stroke="#fff" stroke-width="2.3"/></svg></div><div class="t" style="left:591px;top:391px;height:16px;line-height:16px;white-space:nowrap;color:#222222">亚洲杯</div><div style="left:627px;top:390px;width:13px;height:13px"><svg width="13" height="13" viewBox="0 0 13 13" style="display:block"><rect x="0" y="0" width="13" height="13" rx="2.5" fill="#0075ff"/><path d="M2.7 6.5 L5.3 9.2 L10.4 3.4" fill="none" stroke="#fff" stroke-width="2.3"/></svg></div><div class="t" style="left:640px;top:391px;height:16px;line-height:16px;white-space:nowrap;color:#222222">国际友谊</div><div style="left:688px;top:390px;width:13px;height:13px"><svg width="13" height="13" viewBox="0 0 13 13" style="display:block"><rect x="0" y="0" width="13" height="13" rx="2.5" fill="#0075ff"/><path d="M2.7 6.5 L5.3 9.2 L10.4 3.4" fill="none" stroke="#fff" stroke-width="2.3"/></svg></div><div class="t" style="left:701px;top:391px;height:16px;line-height:16px;white-space:nowrap;color:#222222">泰王杯</div><div style="left:2px;top:409px;width:1028px;height:40px;background:#dde4ee"></div><div class="t" style="left:3px;top:410px;width:80px;height:38px;line-height:38px;text-align:center;color:#222222">类型</div><div class="t" style="left:84px;top:410px;width:79px;height:38px;line-height:38px;text-align:center;color:#222222">日期</div><div class="t" style="left:164px;top:410px;width:109px;height:38px;line-height:38px;text-align:center;color:#222222">主场</div><div class="t" style="left:274px;top:410px;width:93px;height:38px;line-height:38px;text-align:center;color:#222222">比分(半场)</div><div class="t" style="left:368px;top:410px;width:40px;height:38px;line-height:38px;text-align:center;color:#222222">角球</div><div class="t" style="left:409px;top:410px;width:77px;height:38px;line-height:38px;text-align:center;color:#222222">客场</div><div class="t" style="left:487px;top:431px;width:50px;height:18px;line-height:18px;text-align:center;color:#222222">主</div><div class="t" style="left:538px;top:431px;width:87px;height:18px;line-height:18px;text-align:center;color:#222222">让球</div><div class="t" style="left:626px;top:431px;width:53px;height:18px;line-height:18px;text-align:center;color:#222222">客</div><div class="t" style="left:680px;top:431px;width:63px;height:18px;line-height:18px;text-align:center;color:#222222">主</div><div class="t" style="left:744px;top:431px;width:63px;height:18px;line-height:18px;text-align:center;color:#222222">和</div><div class="t" style="left:808px;top:431px;width:80px;height:18px;line-height:18px;text-align:center;color:#222222">客</div><div class="t" style="left:889px;top:431px;width:39px;height:18px;line-height:18px;text-align:center;color:#222222">胜负</div><div class="t" style="left:929px;top:431px;width:39px;height:18px;line-height:18px;text-align:center;color:#222222">让球</div><div class="t" style="left:969px;top:431px;width:60px;height:18px;line-height:18px;text-align:center;color:#222222">进球数</div><div style="left:3px;top:449px;width:80px;height:25px;background:#a20a00"></div><div style="left:84px;top:449px;width:79px;height:25px;background:#fff"></div><div style="left:164px;top:449px;width:109px;height:25px;background:#fff"></div><div style="left:274px;top:449px;width:93px;height:25px;background:#fff"></div><div style="left:368px;top:449px;width:40px;height:25px;background:#fff"></div><div style="left:409px;top:449px;width:77px;height:25px;background:#fff"></div><div style="left:487px;top:449px;width:50px;height:25px;background:#fdf9f5"></div><div style="left:538px;top:449px;width:87px;height:25px;background:#fdf9f5"></div><div style="left:626px;top:449px;width:53px;height:25px;background:#fdf9f5"></div><div style="left:680px;top:449px;width:63px;height:25px;background:#eff7fb"></div><div style="left:744px;top:449px;width:63px;height:25px;background:#eff7fb"></div><div style="left:808px;top:449px;width:80px;height:25px;background:#eff7fb"></div><div style="left:889px;top:449px;width:39px;height:25px;background:#fff"></div><div style="left:929px;top:449px;width:39px;height:25px;background:#fff"></div><div style="left:969px;top:449px;width:60px;height:25px;background:#fff"></div><div class="t" style="left:3px;top:450px;width:80px;height:25px;line-height:25px;text-align:center;color:#222222"><span style="color:#fff">海湾运</span></div><div class="t" style="left:84px;top:450px;width:79px;height:25px;line-height:25px;text-align:center;color:#222222">24-12-22</div><div class="t" style="left:164px;top:450px;width:109px;height:25px;line-height:25px;text-align:center;color:#222222"><span style="color:#1e7e1e">伊拉克(中)</span></div><div class="t" style="left:274px;top:450px;width:93px;height:25px;line-height:25px;text-align:center;color:#222222"><span style="color:#c41a1f">1-0</span>(0-0)</div><div class="t" style="left:368px;top:450px;width:40px;height:25px;line-height:25px;text-align:center;color:#222222">10-0</div><div class="t" style="left:409px;top:450px;width:77px;height:25px;line-height:25px;text-align:center;color:#222222"><span style="color:#222222">也门</span></div><div class="t" style="left:487px;top:450px;width:50px;height:25px;line-height:25px;text-align:center;color:#222222">0.80</div><div class="t" style="left:538px;top:450px;width:87px;height:25px;line-height:25px;text-align:center;color:#222222">球半/两</div><div class="t" style="left:626px;top:450px;width:53px;height:25px;line-height:25px;text-align:center;color:#222222">1.02</div><div class="t" style="left:680px;top:450px;width:63px;height:25px;line-height:25px;text-align:center;color:#222222">1.18</div><div class="t" style="left:744px;top:450px;width:63px;height:25px;line-height:25px;text-align:center;color:#222222">6.19</div><div class="t" style="left:808px;top:450px;width:80px;height:25px;line-height:25px;text-align:center;color:#222222">13.48</div><div class="t" style="left:889px;top:450px;width:39px;height:25px;line-height:25px;text-align:center;color:#222222"><span style="color:#e21c1c">胜</span></div><div class="t" style="left:929px;top:450px;width:39px;height:25px;line-height:25px;text-align:center;color:#222222"><span style="color:#1a1ac0">输</span></div><div class="t" style="left:969px;top:450px;width:60px;height:25px;line-height:25px;text-align:center;color:#222222"><span style="color:#1a1ac0">小</span></div><div style="left:3px;top:475px;width:80px;height:25px;background:#4aa63c"></div><div style="left:84px;top:475px;width:79px;height:25px;background:#f0f0f0"></div><div style="left:164px;top:475px;width:109px;height:25px;background:#f0f0f0"></div><div style="left:274px;top:475px;width:93px;height:25px;background:#f0f0f0"></div><div style="left:368px;top:475px;width:40px;height:25px;background:#f0f0f0"></div><div style="left:409px;top:475px;width:77px;height:25px;background:#f0f0f0"></div><div style="left:487px;top:475px;width:50px;height:25px;background:#fdf9f5"></div><div style="left:538px;top:475px;width:87px;height:25px;background:#fdf9f5"></div><div style="left:626px;top:475px;width:53px;height:25px;background:#fdf9f5"></div><div style="left:680px;top:475px;width:63px;height:25px;background:#eff7fb"></div><div style="left:744px;top:475px;width:63px;height:25px;background:#eff7fb"></div><div style="left:808px;top:475px;width:80px;height:25px;background:#eff7fb"></div><div style="left:889px;top:475px;width:39px;height:25px;background:#f0f0f0"></div><div style="left:929px;top:475px;width:39px;height:25px;background:#f0f0f0"></div><div style="left:969px;top:475px;width:60px;height:25px;background:#f0f0f0"></div><div class="t" style="left:3px;top:476px;width:80px;height:25px;line-height:25px;text-align:center;color:#222222"><span style="color:#fff">亚洲预选</span></div><div class="t" style="left:84px;top:476px;width:79px;height:25px;line-height:25px;text-align:center;color:#222222">24-11-20</div><div class="t" style="left:164px;top:476px;width:109px;height:25px;line-height:25px;text-align:center;color:#222222"><span style="color:#222222">阿曼</span></div><div class="t" style="left:274px;top:476px;width:93px;height:25px;line-height:25px;text-align:center;color:#222222"><span style="color:#c41a1f">0-1</span>(0-1)</div><div class="t" style="left:368px;top:476px;width:40px;height:25px;line-height:25px;text-align:center;color:#222222">4-3</div><div class="t" style="left:409px;top:476px;width:77px;height:25px;line-height:25px;text-align:center;color:#222222"><span style="color:#1e7e1e">伊拉克</span></div><div class="t" style="left:487px;top:476px;width:50px;height:25px;line-height:25px;text-align:center;color:#222222">0.78</div><div class="t" style="left:538px;top:476px;width:87px;height:25px;line-height:25px;text-align:center;color:#222222">平手</div><div class="t" style="left:626px;top:476px;width:53px;height:25px;line-height:25px;text-align:center;color:#222222">1.08</div><div class="t" style="left:680px;top:476px;width:63px;height:25px;line-height:25px;text-align:center;color:#222222">2.78</div><div class="t" style="left:744px;top:476px;width:63px;height:25px;line-height:25px;text-align:center;color:#222222">2.73</div><div class="t" style="left:808px;top:476px;width:80px;height:25px;line-height:25px;text-align:center;color:#222222">2.84</div><div class="t" style="left:889px;top:476px;width:39px;height:25px;line-height:25px;text-align:center;color:#222222"><span style="color:#e21c1c">胜</span></div><div class="t" style="left:929px;top:476px;width:39px;height:25px;line-height:25px;text-align:center;color:#222222"><span style="color:#e21c1c">赢</span></div><div class="t" style="left:969px;top:476px;width:60px;height:25px;line-height:25px;text-align:center;color:#222222"><span style="color:#1a1ac0">小</span></div><div style="left:3px;top:501px;width:80px;height:25px;background:#4aa63c"></div><div style="left:84px;top:501px;width:79px;height:25px;background:#fff"></div><div style="left:164px;top:501px;width:109px;height:25px;background:#fff"></div><div style="left:274px;top:501px;width:93px;height:25px;background:#fff"></div><div style="left:368px;top:501px;width:40px;height:25px;background:#fff"></div><div style="left:409px;top:501px;width:77px;height:25px;background:#fff"></div><div style="left:487px;top:501px;width:50px;height:25px;background:#fdf9f5"></div><div style="left:538px;top:501px;width:87px;height:25px;background:#fdf9f5"></div><div style="left:626px;top:501px;width:53px;height:25px;background:#fdf9f5"></div><div style="left:680px;top:501px;width:63px;height:25px;background:#eff7fb"></div><div style="left:744px;top:501px;width:63px;height:25px;background:#eff7fb"></div><div style="left:808px;top:501px;width:80px;height:25px;background:#eff7fb"></div><div style="left:889px;top:501px;width:39px;height:25px;background:#fff"></div><div style="left:929px;top:501px;width:39px;height:25px;background:#fff"></div><div style="left:969px;top:501px;width:60px;height:25px;background:#fff"></div><div class="t" style="left:3px;top:502px;width:80px;height:25px;line-height:25px;text-align:center;color:#222222"><span style="color:#fff">亚洲预选</span></div><div class="t" style="left:84px;top:502px;width:79px;height:25px;line-height:25px;text-align:center;color:#222222">24-11-15</div><div class="t" style="left:164px;top:502px;width:109px;height:25px;line-height:25px;text-align:center;color:#222222"><span style="color:#1e7e1e">伊拉克</span></div><div class="t" style="left:274px;top:502px;width:93px;height:25px;line-height:25px;text-align:center;color:#222222"><span style="color:#c41a1f">0-0</span>(0-0)</div><div class="t" style="left:368px;top:502px;width:40px;height:25px;line-height:25px;text-align:center;color:#222222">3-5</div><div class="t" style="left:409px;top:502px;width:77px;height:25px;line-height:25px;text-align:center;color:#222222"><span style="color:#222222">约旦</span></div><div class="t" style="left:487px;top:502px;width:50px;height:25px;line-height:25px;text-align:center;color:#222222">0.90</div><div class="t" style="left:538px;top:502px;width:87px;height:25px;line-height:25px;text-align:center;color:#222222">平/半</div><div class="t" style="left:626px;top:502px;width:53px;height:25px;line-height:25px;text-align:center;color:#222222">0.96</div><div class="t" style="left:680px;top:502px;width:63px;height:25px;line-height:25px;text-align:center;color:#222222">2.08</div><div class="t" style="left:744px;top:502px;width:63px;height:25px;line-height:25px;text-align:center;color:#222222">2.94</div><div class="t" style="left:808px;top:502px;width:80px;height:25px;line-height:25px;text-align:center;color:#222222">3.76</div><div class="t" style="left:889px;top:502px;width:39px;height:25px;line-height:25px;text-align:center;color:#222222"><span style="color:#16861a">平</span></div><div class="t" style="left:929px;top:502px;width:39px;height:25px;line-height:25px;text-align:center;color:#222222"><span style="color:#1a1ac0">输</span></div><div class="t" style="left:969px;top:502px;width:60px;height:25px;line-height:25px;text-align:center;color:#222222"><span style="color:#1a1ac0">小</span></div><div style="left:3px;top:527px;width:80px;height:25px;background:#4aa63c"></div><div style="left:84px;top:527px;width:79px;height:25px;background:#f0f0f0"></div><div style="left:164px;top:527px;width:109px;height:25px;background:#f0f0f0"></div><div style="left:274px;top:527px;width:93px;height:25px;background:#f0f0f0"></div><div style="left:368px;top:527px;width:40px;height:25px;background:#f0f0f0"></div><div style="left:409px;top:527px;width:77px;height:25px;background:#f0f0f0"></div><div style="left:487px;top:527px;width:50px;height:25px;background:#fdf9f5"></div><div style="left:538px;top:527px;width:87px;height:25px;background:#fdf9f5"></div><div style="left:626px;top:527px;width:53px;height:25px;background:#fdf9f5"></div><div style="left:680px;top:527px;width:63px;height:25px;background:#eff7fb"></div><div style="left:744px;top:527px;width:63px;height:25px;background:#eff7fb"></div><div style="left:808px;top:527px;width:80px;height:25px;background:#eff7fb"></div><div style="left:889px;top:527px;width:39px;height:25px;background:#f0f0f0"></div><div style="left:929px;top:527px;width:39px;height:25px;background:#f0f0f0"></div><div style="left:969px;top:527px;width:60px;height:25px;background:#f0f0f0"></div><div class="t" style="left:3px;top:528px;width:80px;height:25px;line-height:25px;text-align:center;color:#222222"><span style="color:#fff">亚洲预选</span></div><div class="t" style="left:84px;top:528px;width:79px;height:25px;line-height:25px;text-align:center;color:#222222">24-10-15</div><div class="t" style="left:164px;top:528px;width:109px;height:25px;line-height:25px;text-align:center;color:#222222"><span style="color:#222222">韩国</span></div><div class="t" style="left:274px;top:528px;width:93px;height:25px;line-height:25px;text-align:center;color:#222222"><span style="color:#c41a1f">3-2</span>(1-0)</div><div class="t" style="left:368px;top:528px;width:40px;height:25px;line-height:25px;text-align:center;color:#222222">1-4</div><div class="t" style="left:409px;top:528px;width:77px;height:25px;line-height:25px;text-align:center;color:#222222"><span style="color:#1e7e1e">伊拉克</span></div><div class="t" style="left:487px;top:528px;width:50px;height:25px;line-height:25px;text-align:center;color:#222222">0.94</div><div class="t" style="left:538px;top:528px;width:87px;height:25px;line-height:25px;text-align:center;color:#222222">一球</div><div class="t" style="left:626px;top:528px;width:53px;height:25px;line-height:25px;text-align:center;color:#222222">0.88</div><div class="t" style="left:680px;top:528px;width:63px;height:25px;line-height:25px;text-align:center;color:#222222">1.46</div><div class="t" style="left:744px;top:528px;width:63px;height:25px;line-height:25px;text-align:center;color:#222222">3.74</div><div class="t" style="left:808px;top:528px;width:80px;height:25px;line-height:25px;text-align:center;color:#222222">7.61</div><div class="t" style="left:889px;top:528px;width:39px;height:25px;line-height:25px;text-align:center;color:#222222"><span style="color:#1a1ac0">负</span></div><div class="t" style="left:929px;top:528px;width:39px;height:25px;line-height:25px;text-align:center;color:#222222"><span style="color:#16861a">走</span></div><div class="t" style="left:969px;top:528px;width:60px;height:25px;line-height:25px;text-align:center;color:#222222"><span style="color:#e21c1c">大</span></div><div style="left:3px;top:553px;width:80px;height:25px;background:#4aa63c"></div><div style="left:84px;top:553px;width:79px;height:25px;background:#fff"></div><div style="left:164px;top:553px;width:109px;height:25px;background:#fff"></div><div style="left:274px;top:553px;width:93px;height:25px;background:#fff"></div><div style="left:368px;top:553px;width:40px;height:25px;background:#fff"></div><div style="left:409px;top:553px;width:77px;height:25px;background:#fff"></div><div style="left:487px;top:553px;width:50px;height:25px;background:#fdf9f5"></div><div style="left:538px;top:553px;width:87px;height:25px;background:#fdf9f5"></div><div style="left:626px;top:553px;width:53px;height:25px;background:#fdf9f5"></div><div style="left:680px;top:553px;width:63px;height:25px;background:#eff7fb"></div><div style="left:744px;top:553px;width:63px;height:25px;background:#eff7fb"></div><div style="left:808px;top:553px;width:80px;height:25px;background:#eff7fb"></div><div style="left:889px;top:553px;width:39px;height:25px;background:#fff"></div><div style="left:929px;top:553px;width:39px;height:25px;background:#fff"></div><div style="left:969px;top:553px;width:60px;height:25px;background:#fff"></div><div class="t" style="left:3px;top:554px;width:80px;height:25px;line-height:25px;text-align:center;color:#222222"><span style="color:#fff">亚洲预选</span></div><div class="t" style="left:84px;top:554px;width:79px;height:25px;line-height:25px;text-align:center;color:#222222">24-10-11</div><div class="t" style="left:164px;top:554px;width:109px;height:25px;line-height:25px;text-align:center;color:#222222"><span style="color:#1e7e1e">伊拉克</span></div><div class="t" style="left:274px;top:554px;width:93px;height:25px;line-height:25px;text-align:center;color:#222222"><span style="color:#c41a1f">1-0</span>(1-0)</div><div class="t" style="left:368px;top:554px;width:40px;height:25px;line-height:25px;text-align:center;color:#222222">7-2</div><div class="t" style="left:409px;top:554px;width:77px;height:25px;line-height:25px;text-align:center;color:#222222"><span style="color:#222222">巴勒斯坦</span></div><div class="t" style="left:487px;top:554px;width:50px;height:25px;line-height:25px;text-align:center;color:#222222">0.82</div><div class="t" style="left:538px;top:554px;width:87px;height:25px;line-height:25px;text-align:center;color:#222222">一球</div><div class="t" style="left:626px;top:554px;width:53px;height:25px;line-height:25px;text-align:center;color:#222222">1.00</div><div class="t" style="left:680px;top:554px;width:63px;height:25px;line-height:25px;text-align:center;color:#222222">1.44</div><div class="t" style="left:744px;top:554px;width:63px;height:25px;line-height:25px;text-align:center;color:#222222">4.02</div><div class="t" style="left:808px;top:554px;width:80px;height:25px;line-height:25px;text-align:center;color:#222222">7.05</div><div class="t" style="left:889px;top:554px;width:39px;height:25px;line-height:25px;text-align:center;color:#222222"><span style="color:#e21c1c">胜</span></div><div class="t" style="left:929px;top:554px;width:39px;height:25px;line-height:25px;text-align:center;color:#222222"><span style="color:#16861a">走</span></div><div class="t" style="left:969px;top:554px;width:60px;height:25px;line-height:25px;text-align:center;color:#222222"><span style="color:#1a1ac0">小</span></div><div style="left:3px;top:579px;width:80px;height:25px;background:#4aa63c"></div><div style="left:84px;top:579px;width:79px;height:25px;background:#f0f0f0"></div><div style="left:164px;top:579px;width:109px;height:25px;background:#f0f0f0"></div><div style="left:274px;top:579px;width:93px;height:25px;background:#f0f0f0"></div><div style="left:368px;top:579px;width:40px;height:25px;background:#f0f0f0"></div><div style="left:409px;top:579px;width:77px;height:25px;background:#f0f0f0"></div><div style="left:487px;top:579px;width:50px;height:25px;background:#fdf9f5"></div><div style="left:538px;top:579px;width:87px;height:25px;background:#fdf9f5"></div><div style="left:626px;top:579px;width:53px;height:25px;background:#fdf9f5"></div><div style="left:680px;top:579px;width:63px;height:25px;background:#eff7fb"></div><div style="left:744px;top:579px;width:63px;height:25px;background:#eff7fb"></div><div style="left:808px;top:579px;width:80px;height:25px;background:#eff7fb"></div><div style="left:889px;top:579px;width:39px;height:25px;background:#f0f0f0"></div><div style="left:929px;top:579px;width:39px;height:25px;background:#f0f0f0"></div><div style="left:969px;top:579px;width:60px;height:25px;background:#f0f0f0"></div><div class="t" style="left:3px;top:580px;width:80px;height:25px;line-height:25px;text-align:center;color:#222222"><span style="color:#fff">亚洲预选</span></div><div class="t" style="left:84px;top:580px;width:79px;height:25px;line-height:25px;text-align:center;color:#222222">24-09-11</div><div class="t" style="left:164px;top:580px;width:109px;height:25px;line-height:25px;text-align:center;color:#222222"><span style="color:#222222">科威特</span></div><div class="t" style="left:274px;top:580px;width:93px;height:25px;line-height:25px;text-align:center;color:#222222"><span style="color:#c41a1f">0-0</span>(0-0)</div><div class="t" style="left:368px;top:580px;width:40px;height:25px;line-height:25px;text-align:center;color:#222222">0-4</div><div class="t" style="left:409px;top:580px;width:77px;height:25px;line-height:25px;text-align:center;color:#222222"><span style="color:#1e7e1e">伊拉克</span><span style="display:inline-block;background:#e00000;color:#fff;width:8px;height:15px;line-height:15px;text-align:center;font-size:11px;font-weight:bold;vertical-align:top;margin-top:4px;overflow:hidden">1</span></div><div class="t" style="left:487px;top:580px;width:50px;height:25px;line-height:25px;text-align:center;color:#222222">0.88</div><div class="t" style="left:538px;top:580px;width:87px;height:25px;line-height:25px;text-align:center;color:#222222">受半球</div><div class="t" style="left:626px;top:580px;width:53px;height:25px;line-height:25px;text-align:center;color:#222222">0.94</div><div class="t" style="left:680px;top:580px;width:63px;height:25px;line-height:25px;text-align:center;color:#222222">4.64</div><div class="t" style="left:744px;top:580px;width:63px;height:25px;line-height:25px;text-align:center;color:#222222">3.34</div><div class="t" style="left:808px;top:580px;width:80px;height:25px;line-height:25px;text-align:center;color:#222222">1.76</div><div class="t" style="left:889px;top:580px;width:39px;height:25px;line-height:25px;text-align:center;color:#222222"><span style="color:#16861a">平</span></div><div class="t" style="left:929px;top:580px;width:39px;height:25px;line-height:25px;text-align:center;color:#222222"><span style="color:#1a1ac0">输</span></div><div class="t" style="left:969px;top:580px;width:60px;height:25px;line-height:25px;text-align:center;color:#222222"><span style="color:#1a1ac0">小</span></div><div style="left:3px;top:605px;width:80px;height:25px;background:#4aa63c"></div><div style="left:84px;top:605px;width:79px;height:25px;background:#fff"></div><div style="left:164px;top:605px;width:109px;height:25px;background:#fff"></div><div style="left:274px;top:605px;width:93px;height:25px;background:#fff"></div><div style="left:368px;top:605px;width:40px;height:25px;background:#fff"></div><div style="left:409px;top:605px;width:77px;height:25px;background:#fff"></div><div style="left:487px;top:605px;width:50px;height:25px;background:#fdf9f5"></div><div style="left:538px;top:605px;width:87px;height:25px;background:#fdf9f5"></div><div style="left:626px;top:605px;width:53px;height:25px;background:#fdf9f5"></div><div style="left:680px;top:605px;width:63px;height:25px;background:#eff7fb"></div><div style="left:744px;top:605px;width:63px;height:25px;background:#eff7fb"></div><div style="left:808px;top:605px;width:80px;height:25px;background:#eff7fb"></div><div style="left:889px;top:605px;width:39px;height:25px;background:#fff"></div><div style="left:929px;top:605px;width:39px;height:25px;background:#fff"></div><div style="left:969px;top:605px;width:60px;height:25px;background:#fff"></div><div class="t" style="left:3px;top:606px;width:80px;height:25px;line-height:25px;text-align:center;color:#222222"><span style="color:#fff">亚洲预选</span></div><div class="t" style="left:84px;top:606px;width:79px;height:25px;line-height:25px;text-align:center;color:#222222">24-09-06</div><div class="t" style="left:164px;top:606px;width:109px;height:25px;line-height:25px;text-align:center;color:#222222"><span style="color:#1e7e1e">伊拉克</span></div><div class="t" style="left:274px;top:606px;width:93px;height:25px;line-height:25px;text-align:center;color:#222222"><span style="color:#c41a1f">1-0</span>(1-0)</div><div class="t" style="left:368px;top:606px;width:40px;height:25px;line-height:25px;text-align:center;color:#222222">2-7</div><div class="t" style="left:409px;top:606px;width:77px;height:25px;line-height:25px;text-align:center;color:#222222"><span style="color:#222222">阿曼</span><span style="display:inline-block;background:#e00000;color:#fff;width:8px;height:15px;line-height:15px;text-align:center;font-size:11px;font-weight:bold;vertical-align:top;margin-top:4px;overflow:hidden">1</span></div><div class="t" style="left:487px;top:606px;width:50px;height:25px;line-height:25px;text-align:center;color:#222222">0.91</div><div class="t" style="left:538px;top:606px;width:87px;height:25px;line-height:25px;text-align:center;color:#222222">半/一</div><div class="t" style="left:626px;top:606px;width:53px;height:25px;line-height:25px;text-align:center;color:#222222">0.91</div><div class="t" style="left:680px;top:606px;width:63px;height:25px;line-height:25px;text-align:center;color:#222222">1.62</div><div class="t" style="left:744px;top:606px;width:63px;height:25px;line-height:25px;text-align:center;color:#222222">3.35</div><div class="t" style="left:808px;top:606px;width:80px;height:25px;line-height:25px;text-align:center;color:#222222">5.90</div><div class="t" style="left:889px;top:606px;width:39px;height:25px;line-height:25px;text-align:center;color:#222222"><span style="color:#e21c1c">胜</span></div><div class="t" style="left:929px;top:606px;width:39px;height:25px;line-height:25px;text-align:center;color:#222222"><span style="color:#e21c1c">赢</span></div><div class="t" style="left:969px;top:606px;width:60px;height:25px;line-height:25px;text-align:center;color:#222222"><span style="color:#1a1ac0">小</span></div><div style="left:3px;top:631px;width:80px;height:25px;background:#4aa63c"></div><div style="left:84px;top:631px;width:79px;height:25px;background:#f0f0f0"></div><div style="left:164px;top:631px;width:109px;height:25px;background:#f0f0f0"></div><div style="left:274px;top:631px;width:93px;height:25px;background:#f0f0f0"></div><div style="left:368px;top:631px;width:40px;height:25px;background:#f0f0f0"></div><div style="left:409px;top:631px;width:77px;height:25px;background:#f0f0f0"></div><div style="left:487px;top:631px;width:50px;height:25px;background:#fdf9f5"></div><div style="left:538px;top:631px;width:87px;height:25px;background:#fdf9f5"></div><div style="left:626px;top:631px;width:53px;height:25px;background:#fdf9f5"></div><div style="left:680px;top:631px;width:63px;height:25px;background:#eff7fb"></div><div style="left:744px;top:631px;width:63px;height:25px;background:#eff7fb"></div><div style="left:808px;top:631px;width:80px;height:25px;background:#eff7fb"></div><div style="left:889px;top:631px;width:39px;height:25px;background:#f0f0f0"></div><div style="left:929px;top:631px;width:39px;height:25px;background:#f0f0f0"></div><div style="left:969px;top:631px;width:60px;height:25px;background:#f0f0f0"></div><div class="t" style="left:3px;top:632px;width:80px;height:25px;line-height:25px;text-align:center;color:#222222"><span style="color:#fff">亚洲预选</span></div><div class="t" style="left:84px;top:632px;width:79px;height:25px;line-height:25px;text-align:center;color:#222222">24-06-12</div><div class="t" style="left:164px;top:632px;width:109px;height:25px;line-height:25px;text-align:center;color:#222222"><span style="color:#1e7e1e">伊拉克</span></div><div class="t" style="left:274px;top:632px;width:93px;height:25px;line-height:25px;text-align:center;color:#222222"><span style="color:#c41a1f">3-1</span>(1-0)</div><div class="t" style="left:368px;top:632px;width:40px;height:25px;line-height:25px;text-align:center;color:#222222">3-2</div><div class="t" style="left:409px;top:632px;width:77px;height:25px;line-height:25px;text-align:center;color:#222222"><span style="color:#222222">越南</span></div><div class="t" style="left:487px;top:632px;width:50px;height:25px;line-height:25px;text-align:center;color:#222222">0.88</div><div class="t" style="left:538px;top:632px;width:87px;height:25px;line-height:25px;text-align:center;color:#222222">一/球半</div><div class="t" style="left:626px;top:632px;width:53px;height:25px;line-height:25px;text-align:center;color:#222222">0.94</div><div class="t" style="left:680px;top:632px;width:63px;height:25px;line-height:25px;text-align:center;color:#222222">1.37</div><div class="t" style="left:744px;top:632px;width:63px;height:25px;line-height:25px;text-align:center;color:#222222">4.67</div><div class="t" style="left:808px;top:632px;width:80px;height:25px;line-height:25px;text-align:center;color:#222222">7.05</div><div class="t" style="left:889px;top:632px;width:39px;height:25px;line-height:25px;text-align:center;color:#222222"><span style="color:#e21c1c">胜</span></div><div class="t" style="left:929px;top:632px;width:39px;height:25px;line-height:25px;text-align:center;color:#222222"><span style="color:#e21c1c">赢</span></div><div class="t" style="left:969px;top:632px;width:60px;height:25px;line-height:25px;text-align:center;color:#222222"><span style="color:#e21c1c">大</span></div><div style="left:3px;top:657px;width:80px;height:25px;background:#4aa63c"></div><div style="left:84px;top:657px;width:79px;height:25px;background:#fff"></div><div style="left:164px;top:657px;width:109px;height:25px;background:#fff"></div><div style="left:274px;top:657px;width:93px;height:25px;background:#fff"></div><div style="left:368px;top:657px;width:40px;height:25px;background:#fff"></div><div style="left:409px;top:657px;width:77px;height:25px;background:#fff"></div><div style="left:487px;top:657px;width:50px;height:25px;background:#fdf9f5"></div><div style="left:538px;top:657px;width:87px;height:25px;background:#fdf9f5"></div><div style="left:626px;top:657px;width:53px;height:25px;background:#fdf9f5"></div><div style="left:680px;top:657px;width:63px;height:25px;background:#eff7fb"></div><div style="left:744px;top:657px;width:63px;height:25px;background:#eff7fb"></div><div style="left:808px;top:657px;width:80px;height:25px;background:#eff7fb"></div><div style="left:889px;top:657px;width:39px;height:25px;background:#fff"></div><div style="left:929px;top:657px;width:39px;height:25px;background:#fff"></div><div style="left:969px;top:657px;width:60px;height:25px;background:#fff"></div><div class="t" style="left:3px;top:658px;width:80px;height:25px;line-height:25px;text-align:center;color:#222222"><span style="color:#fff">亚洲预选</span></div><div class="t" style="left:84px;top:658px;width:79px;height:25px;line-height:25px;text-align:center;color:#222222">24-06-06</div><div class="t" style="left:164px;top:658px;width:109px;height:25px;line-height:25px;text-align:center;color:#222222"><span style="display:inline-block;background:#e00000;color:#fff;width:8px;height:15px;line-height:15px;text-align:center;font-size:11px;font-weight:bold;vertical-align:top;margin-top:4px;overflow:hidden">1</span><span style="color:#222222">印度尼西亚</span></div><div class="t" style="left:274px;top:658px;width:93px;height:25px;line-height:25px;text-align:center;color:#222222"><span style="color:#c41a1f">0-2</span>(0-0)</div><div class="t" style="left:368px;top:658px;width:40px;height:25px;line-height:25px;text-align:center;color:#222222">8-3</div><div class="t" style="left:409px;top:658px;width:77px;height:25px;line-height:25px;text-align:center;color:#222222"><span style="color:#1e7e1e">伊拉克</span></div><div class="t" style="left:487px;top:658px;width:50px;height:25px;line-height:25px;text-align:center;color:#222222">0.77</div><div class="t" style="left:538px;top:658px;width:87px;height:25px;line-height:25px;text-align:center;color:#222222">受半球</div><div class="t" style="left:626px;top:658px;width:53px;height:25px;line-height:25px;text-align:center;color:#222222">1.05</div><div class="t" style="left:680px;top:658px;width:63px;height:25px;line-height:25px;text-align:center;color:#222222">3.67</div><div class="t" style="left:744px;top:658px;width:63px;height:25px;line-height:25px;text-align:center;color:#222222">3.24</div><div class="t" style="left:808px;top:658px;width:80px;height:25px;line-height:25px;text-align:center;color:#222222">1.97</div><div class="t" style="left:889px;top:658px;width:39px;height:25px;line-height:25px;text-align:center;color:#222222"><span style="color:#e21c1c">胜</span></div><div class="t" style="left:929px;top:658px;width:39px;height:25px;line-height:25px;text-align:center;color:#222222"><span style="color:#e21c1c">赢</span></div><div class="t" style="left:969px;top:658px;width:60px;height:25px;line-height:25px;text-align:center;color:#222222"><span style="color:#1a1ac0">小</span></div><div style="left:3px;top:683px;width:80px;height:25px;background:#4aa63c"></div><div style="left:84px;top:683px;width:79px;height:25px;background:#f0f0f0"></div><div style="left:164px;top:683px;width:109px;height:25px;background:#f0f0f0"></div><div style="left:274px;top:683px;width:93px;height:25px;background:#f0f0f0"></div><div style="left:368px;top:683px;width:40px;height:25px;background:#f0f0f0"></div><div style="left:409px;top:683px;width:77px;height:25px;background:#f0f0f0"></div><div style="left:487px;top:683px;width:50px;height:25px;background:#fdf9f5"></div><div style="left:538px;top:683px;width:87px;height:25px;background:#fdf9f5"></div><div style="left:626px;top:683px;width:53px;height:25px;background:#fdf9f5"></div><div style="left:680px;top:683px;width:63px;height:25px;background:#eff7fb"></div><div style="left:744px;top:683px;width:63px;height:25px;background:#eff7fb"></div><div style="left:808px;top:683px;width:80px;height:25px;background:#eff7fb"></div><div style="left:889px;top:683px;width:39px;height:25px;background:#f0f0f0"></div><div style="left:929px;top:683px;width:39px;height:25px;background:#f0f0f0"></div><div style="left:969px;top:683px;width:60px;height:25px;background:#f0f0f0"></div><div class="t" style="left:3px;top:684px;width:80px;height:25px;line-height:25px;text-align:center;color:#222222"><span style="color:#fff">亚洲预选</span></div><div class="t" style="left:84px;top:684px;width:79px;height:25px;line-height:25px;text-align:center;color:#222222">24-03-26</div><div class="t" style="left:164px;top:684px;width:109px;height:25px;line-height:25px;text-align:center;color:#222222"><span style="color:#222222">菲律宾</span></div><div class="t" style="left:274px;top:684px;width:93px;height:25px;line-height:25px;text-align:center;color:#222222"><span style="color:#c41a1f">0-5</span>(0-3)</div><div class="t" style="left:368px;top:684px;width:40px;height:25px;line-height:25px;text-align:center;color:#222222">2-7</div><div class="t" style="left:409px;top:684px;width:77px;height:25px;line-height:25px;text-align:center;color:#222222"><span style="color:#1e7e1e">伊拉克</span></div><div class="t" style="left:487px;top:684px;width:50px;height:25px;line-height:25px;text-align:center;color:#222222">0.80</div><div class="t" style="left:538px;top:684px;width:87px;height:25px;line-height:25px;text-align:center;color:#222222">受球半</div><div class="t" style="left:626px;top:684px;width:53px;height:25px;line-height:25px;text-align:center;color:#222222">1.02</div><div class="t" style="left:680px;top:684px;width:63px;height:25px;line-height:25px;text-align:center;color:#222222">9.95</div><div class="t" style="left:744px;top:684px;width:63px;height:25px;line-height:25px;text-align:center;color:#222222">4.93</div><div class="t" style="left:808px;top:684px;width:80px;height:25px;line-height:25px;text-align:center;color:#222222">1.27</div><div class="t" style="left:889px;top:684px;width:39px;height:25px;line-height:25px;text-align:center;color:#222222"><span style="color:#e21c1c">胜</span></div><div class="t" style="left:929px;top:684px;width:39px;height:25px;line-height:25px;text-align:center;color:#222222"><span style="color:#e21c1c">赢</span></div><div class="t" style="left:969px;top:684px;width:60px;height:25px;line-height:25px;text-align:center;color:#222222"><span style="color:#e21c1c">大</span></div><div style="left:2px;top:708px;width:1028px;height:26px;background:#fff"></div><div class="t" style="left:3px;top:710px;width:1026px;height:25px;line-height:25px;text-align:center;color:#222222;letter-spacing:0.2px">近<span style="color:#c41a1f">10</span>场,胜7平2负1, 胜率:<span style="color:#c41a1f">70%</span> 让胜率:<span style="color:#c41a1f">50%</span> 大率:<span style="color:#c41a1f">30%</span> 单率:<span style="color:#c41a1f">60%</span></div><div style="left:2px;top:409px;width:1028px;height:1px;background:#bdbdbd"></div><div style="left:2px;top:448px;width:1028px;height:1px;background:#bdbdbd"></div><div style="left:2px;top:474px;width:1028px;height:1px;background:#bdbdbd"></div><div style="left:2px;top:500px;width:1028px;height:1px;background:#bdbdbd"></div><div style="left:2px;top:526px;width:1028px;height:1px;background:#bdbdbd"></div><div style="left:2px;top:552px;width:1028px;height:1px;background:#bdbdbd"></div><div style="left:2px;top:578px;width:1028px;height:1px;background:#bdbdbd"></div><div style="left:2px;top:604px;width:1028px;height:1px;background:#bdbdbd"></div><div style="left:2px;top:630px;width:1028px;height:1px;background:#bdbdbd"></div><div style="left:2px;top:656px;width:1028px;height:1px;background:#bdbdbd"></div><div style="left:2px;top:682px;width:1028px;height:1px;background:#bdbdbd"></div><div style="left:2px;top:708px;width:1028px;height:1px;background:#bdbdbd"></div><div style="left:2px;top:734px;width:1028px;height:1px;background:#bdbdbd"></div><div style="left:486px;top:429px;width:544px;height:1px;background:#bdbdbd"></div><div style="left:2px;top:409px;width:1px;height:326px;background:#bdbdbd"></div><div style="left:83px;top:409px;width:1px;height:299px;background:#bdbdbd"></div><div style="left:163px;top:409px;width:1px;height:299px;background:#bdbdbd"></div><div style="left:273px;top:409px;width:1px;height:299px;background:#bdbdbd"></div><div style="left:367px;top:409px;width:1px;height:299px;background:#bdbdbd"></div><div style="left:408px;top:409px;width:1px;height:299px;background:#bdbdbd"></div><div style="left:486px;top:409px;width:1px;height:299px;background:#bdbdbd"></div><div style="left:537px;top:429px;width:1px;height:279px;background:#bdbdbd"></div><div style="left:625px;top:429px;width:1px;height:279px;background:#bdbdbd"></div><div style="left:679px;top:409px;width:1px;height:299px;background:#bdbdbd"></div><div style="left:743px;top:429px;width:1px;height:279px;background:#bdbdbd"></div><div style="left:807px;top:429px;width:1px;height:279px;background:#bdbdbd"></div><div style="left:888px;top:409px;width:1px;height:299px;background:#bdbdbd"></div><div style="left:928px;top:429px;width:1px;height:279px;background:#bdbdbd"></div><div style="left:968px;top:429px;width:1px;height:279px;background:#bdbdbd"></div><div style="left:1029px;top:409px;width:1px;height:326px;background:#bdbdbd"></div><div style="left:523px;top:410px;width:59px;height:17px;background:#fff;border:1px solid #767676;border-radius:1.5px;"><div class="t" style="left:4px;top:0px;height:17px;line-height:17px;font-size:13px;color:#000;">Crow*</div><svg width="11" height="7" viewBox="0 0 11 7" style="position:absolute;right:3px;top:5px"><path d="M1.2 1.2 L5.5 5.5 L9.8 1.2" fill="none" stroke="#000" stroke-width="2.1"/></svg></div><div style="left:591px;top:410px;width:49px;height:17px;background:#fff;border:1px solid #767676;border-radius:1.5px;"><div class="t" style="left:4px;top:0px;height:17px;line-height:17px;font-size:13px;color:#000;">终指</div><svg width="11" height="7" viewBox="0 0 11 7" style="position:absolute;right:3px;top:5px"><path d="M1.2 1.2 L5.5 5.5 L9.8 1.2" fill="none" stroke="#000" stroke-width="2.1"/></svg></div><div style="left:719px;top:410px;width:68px;height:17px;background:#fff;border:1px solid #767676;border-radius:1.5px;"><div class="t" style="left:4px;top:0px;height:17px;line-height:17px;font-size:13px;color:#000;">平均值</div><svg width="11" height="7" viewBox="0 0 11 7" style="position:absolute;right:3px;top:5px"><path d="M1.2 1.2 L5.5 5.5 L9.8 1.2" fill="none" stroke="#000" stroke-width="2.1"/></svg></div><div style="left:797px;top:410px;width:49px;height:17px;background:#fff;border:1px solid #767676;border-radius:1.5px;"><div class="t" style="left:4px;top:0px;height:17px;line-height:17px;font-size:13px;color:#000;">终指</div><svg width="11" height="7" viewBox="0 0 11 7" style="position:absolute;right:3px;top:5px"><path d="M1.2 1.2 L5.5 5.5 L9.8 1.2" fill="none" stroke="#000" stroke-width="2.1"/></svg></div><div style="left:933px;top:410px;width:49px;height:17px;background:#fff;border:1px solid #767676;border-radius:1.5px;"><div class="t" style="left:4px;top:0px;height:17px;line-height:17px;font-size:13px;color:#000;">全场</div><svg width="11" height="7" viewBox="0 0 11 7" style="position:absolute;right:3px;top:5px"><path d="M1.2 1.2 L5.5 5.5 L9.8 1.2" fill="none" stroke="#000" stroke-width="2.1"/></svg></div><div style="left:2px;top:33px;width:1028px;height:1px;background:#e3dff8"></div>
</body></html>
